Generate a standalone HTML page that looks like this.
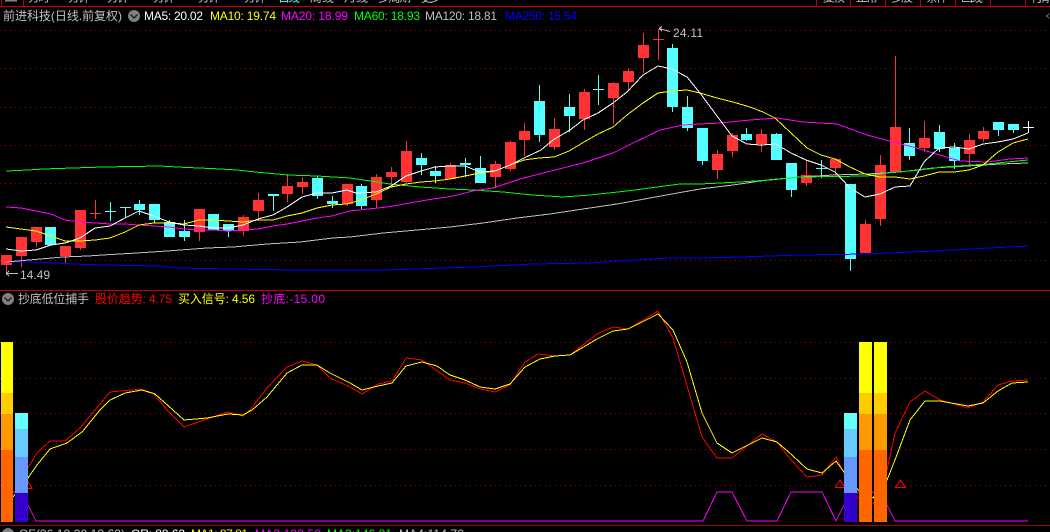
<!DOCTYPE html>
<html lang="zh"><head><meta charset="utf-8"><title>前进科技</title>
<style>
html,body{margin:0;padding:0;background:#000;width:1050px;height:532px;overflow:hidden}
svg{display:block;position:absolute;left:0;top:0}
text{font-family:"Liberation Sans","WenQuanYi Zen Hei","Noto Sans CJK SC",sans-serif;font-size:12px;white-space:pre}
.l{fill:none;stroke-width:1;shape-rendering:crispEdges}
.m{fill:none;stroke-width:1;shape-rendering:crispEdges}
</style></head><body>
<svg width="1050" height="532" viewBox="0 0 1050 532" xmlns="http://www.w3.org/2000/svg">
<rect width="1050" height="532" fill="#000"/>

<!-- top tabs -->
<g fill="#c0c0c0">
<text x="28" y="1.500" textLength="22">分时</text><text x="68" y="1.500" textLength="22">分钟</text><text x="107" y="1.500" textLength="22">分钟</text><text x="153" y="1.500" textLength="22">分钟</text><text x="198" y="1.500" textLength="22">分钟</text><text x="244" y="1.500" textLength="22">分钟</text>
<text x="278" y="1.500" textLength="22" fill="#54ffff">日线</text>
<text x="310" y="1.500" textLength="24">周线</text><text x="344" y="1.500" textLength="24">月线</text><text x="378" y="1.500" textLength="33">多周期</text><text x="421" y="1.500" textLength="20">更多</text>
<text x="823" y="1.500" textLength="22">复权</text><text x="856" y="1.500" textLength="22">正常</text><text x="891" y="1.500" textLength="22">多股</text><text x="926" y="1.500" textLength="22">条件</text><text x="961" y="1.500" textLength="22">画线</text><text x="1031" y="1.500" textLength="19">行情</text>
</g>
<rect x="5" y="0" width="12" height="1.500" fill="#808080"/>
<path class="l" stroke="#c00000" d="M1.500 0V6M23.500 0V6M816.500 0V6M850.500 0V6M885.500 0V6M920.500 0V6M955.500 0V6M990.500 0V6M1025.500 0V6"/>
<path class="l" stroke="#c00000" d="M0 6.500H1050M0 290.500H1050"/>
<path class="l" stroke="#a00000" d="M0 525.500H1050"/>

<!-- grid -->
<path class="l" stroke="#a80000" stroke-dasharray="1 4" d="M0 30.500H1050M0 68.500H1050M0 107.500H1050M0 145.500H1050M0 183.500H1050M0 222.500H1050M0 260.500H1050M0 342.500H1050M0 378.500H1050M0 413.500H1050M0 449.500H1050M0 485.500H1050"/>

<!-- red candles: wicks -->
<path class="l" stroke="#ff3333" d="M6.500 255V273M21.500 237V267M36.500 227V247M65.500 246V263M80.500 210V250M95.500 200V219M90 213.500H101M199.500 209V241M243.500 215V236M258.500 193V218M287.500 174V202M302.500 177V194M347.500 184V206M376.500 174V208M391.500 167V186M406.500 141V183M450.500 163V179M495.500 161V188M510.500 141V171M524.500 123V156M554.500 118V150M584.500 89V130M613.500 82V124M628.500 68V90M643.500 33V73M658.500 29V60M653 39.500H664M717.500 150V179M732.500 133V157M761.500 129V152M806.500 160V186M835.500 158V175M865.500 220V253M880.500 155V226M895.500 56V172M924.500 121V152M969.500 134V165M983.500 127V142"/>
<!-- red candles: bodies -->
<path class="l" stroke="#ff3333" style="stroke-width:11" d="M6.500 255V265M21.500 237V256M36.500 227V242M65.500 246V256M80.500 210V248M199.500 209V232M243.500 217V231M258.500 200V211M287.500 186V194M302.500 182V187M347.500 184V204M376.500 177V200M391.500 172V177M406.500 151V182M450.500 165V179M495.500 164V177M510.500 142V169M524.500 131V140M554.500 129V147M584.500 92V119M613.500 83V98M628.500 71V82M643.500 45V58M717.500 154V170M732.500 135V151M761.500 134V144M806.500 175V183M835.500 159V168M865.500 224V253M880.500 165V219M895.500 127V172M924.500 138V148M969.500 140V154M983.500 131V139"/>
<!-- cyan candles: wicks -->
<path class="l" stroke="#54ffff" d="M110.500 202V221M105 211.500H116M125.500 207V218M120 207.500H131M139.500 200V215M154.500 204V223M169.500 220V237M184.500 220V241M228.500 224V237M273.500 194V211M317.500 176V199M332.500 196V208M361.500 184V209M421.500 153V175M435.500 166V183M465.500 158V177M480.500 156V183M539.500 85V142M569.500 94V132M598.500 75V105M593 89.500H604M672.500 44V112M687.500 96V131M702.500 128V165M746.500 128V141M776.500 133V160M791.500 163V197M821.500 160V178M816 168.500H827M850.500 184V271M909.500 128V160M939.500 125V152M954.500 143V169M998.500 122V136M1013.500 124V133"/>
<!-- cyan candles: bodies -->
<path class="l" stroke="#54ffff" style="stroke-width:11" d="M50.500 227V245M139.500 204V210M154.500 204V220M169.500 222V237M184.500 231V237M213.500 214V230M228.500 224V231M273.500 194V196M317.500 178V196M332.500 201V204M361.500 186V206M421.500 158V165M435.500 171V176M465.500 163V165M480.500 168V183M539.500 101V135M569.500 107V116M672.500 48V107M687.500 107V128M702.500 128V161M746.500 134V140M776.500 134V160M791.500 163V190M850.500 184V259M909.500 143V156M939.500 132V149M954.500 148V161M998.500 122V130M1013.500 124V130"/>
<path class="l" stroke="#ffffff" d="M1028.500 121V133M1023 127.500H1034"/>

<!-- moving averages -->
<polyline class="m" stroke="#0000ff" points="6,262 29,262 57,263 73,264 103,265 160,266 177,268 233,269 293,270 350,270 383,270 413,269 473,267 533,264 590,263 637,260 667,258 700,258 740,257 800,255 867,254 933,251 990,248 1028,246"/>
<polyline class="m" stroke="#c0c0c0" points="6,262 29,260 63,257 88,256 103,255 137,253 167,251 207,248 233,247 267,244 300,242 333,238 350,237 383,233 417,230 450,227 483,223 517,218 550,214 583,209 617,204 650,198 683,192 700,189 733,185 767,180 800,177 833,175 867,174 900,172 933,168 967,166 1000,164 1028,163"/>
<polyline class="m" stroke="#00ff00" points="6,171 28,170 43,169 73,168 103,167 160,166 177,167 221,169 237,170 255,172 288,175 317,176 350,178 390,184 420,187 450,189 473,190 503,192 532,195 563,197 590,195 627,191 657,187 680,184 700,184 740,182 770,180 800,177 867,176 887,173 920,170 943,167 987,164 1028,160"/>
<polyline class="m" stroke="#ff00ff" points="6,207 21,208 36,211 51,214 65,220 80,222 95,223 110,224 125,224 139,225 154,226 169,227 184,229 199,230 213,230 228,231 243,230 258,229 273,226 287,224 302,221 317,218 332,216 350,211 387,207 427,200 453,196 473,191 493,188 520,179 547,172 583,163 613,153 633,143 660,130 683,125 700,124 720,123 750,120 777,118 803,122 837,124 867,135 893,142 913,147 933,153 960,161 987,162 1010,159 1028,158"/>
<polyline class="m" stroke="#ffff00" points="6,227 21,229 36,231 51,236 65,241 80,241 95,240 110,238 125,232 139,225 154,223 169,223 184,224 199,220 213,220 228,221 243,222 258,220 273,220 287,216 302,213 317,208 332,205 347,204 361,200 376,194 391,187 406,184 421,182 435,181 450,179 465,176 480,173 495,171 510,165 524,160 539,158 554,157 569,151 584,142 598,134 613,127 627,115 643,103 658,93 672,91 687,90 700,93 717,98 733,102 750,107 763,112 775,118 807,148 821,155 835,159 850,167 865,174 880,177 895,177 910,179 924,176 939,172 954,172 969,170 983,165 998,152 1013,143 1028,139"/>
<polyline class="m" stroke="#ffffff" points="6,249 21,251 36,250 51,245 65,243 80,238 95,228 110,226 125,218 139,211 154,216 169,222 184,225 199,226 213,228 228,228 243,225 258,219 273,215 287,207 302,197 317,193 332,193 347,190 356,193 376,192 391,186 406,176 421,171 435,167 450,166 465,166 480,172 495,171 510,165 524,158 541,150 553,140 570,130 583,120 598,113 613,103 627,92 643,75 658,66 672,69 687,77 700,93 720,120 732,136 747,144 761,145 776,144 791,153 806,160 821,165 835,172 850,188 865,197 880,194 895,187 910,186 924,162 939,148 954,147 969,149 983,144 998,142 1013,139 1028,133"/>

<!-- price labels -->
<path class="l" stroke="#c0c0c0" d="M6 273.500H18M6 273.500L9 271M6 273.500L9 276M659 28.500L670 31.500M659 28.500L662 26.500M659 28.500L662 31"/>
<text x="20" y="279" fill="#c0c0c0" textLength="30">14.49</text>
<text x="673" y="37" fill="#c0c0c0" textLength="30">24.11</text>

<!-- header main -->
<text x="3" y="20" fill="#c0c0c0" textLength="119">前进科技(日线.前复权)</text>
<circle cx="134" cy="16" r="6" fill="#808080"/><path d="M130.500 14.500L134 18L137.500 14.500" fill="none" stroke="#222" stroke-width="1.500"/>
<text x="144" y="20" fill="#ffffff" textLength="59">MA5: 20.02</text>
<text x="210" y="20" fill="#ffff00" textLength="66">MA10: 19.74</text>
<text x="281" y="20" fill="#ff00ff" textLength="67">MA20: 18.99</text>
<text x="354" y="20" fill="#00ff00" textLength="66">MA60: 18.93</text>
<text x="425" y="20" fill="#c0c0c0" textLength="72">MA120: 18.81</text>
<text x="505" y="20" fill="#0000ff" textLength="72">MA250: 15.54</text>
<path class="l" stroke="#808080" d="M1049 14L1046.500 16L1049 18"/>

<!-- indicator lines -->
<polyline class="m" stroke="#ff00ff" points="13,492 20,492 28,505 36,521 703,521 717,492 732,492 747,521 777,521 791,492 822,492 836,521 844,505 858,492 873,492 887,505 895,521 1028,521"/>
<path class="l" stroke="#ff0000" d="M22 488.500L27 480L32 488.500ZM835.500 487.500L840 480L845 487.500ZM895.500 487.500L900.500 480L905.500 487.500Z"/>
<polyline class="m" stroke="#ff0000" points="16,484 28,468 37,453 50,441 65,441 80,428 95,410 110,392 132,390 140,389 153,393 167,410 184,427 207,419 228,412 243,416 250,410 267,388 287,367 302,361 317,365 330,378 350,387 362,394 378,384 392,381 406,358 422,360 450,380 465,383 480,389 495,392 510,385 525,362 538,354 555,356 570,355 597,334 613,327 628,329 658,311 673,338 702,437 717,458 732,458 762,434 777,442 792,461 807,477 822,475 836,457 844,473 858,498 873,504 887,470 895,433 910,402 925,391 940,400 968,408 983,402 998,385 1012,381 1028,380"/>
<polyline class="m" stroke="#ffff00" points="13,497 28,478 37,465 50,449 67,443 82,432 100,410 110,400 125,393 142,390 155,394 173,410 184,420 207,418 228,414 243,415 252,410 267,397 287,373 302,365 317,365 330,373 350,383 362,390 378,386 392,383 406,366 422,362 437,366 450,375 465,380 480,387 495,389 510,384 525,367 540,359 555,356 570,355 597,339 613,331 628,329 658,314 673,330 687,362 702,413 717,443 732,453 762,438 777,442 792,455 807,469 822,473 836,461 844,472 858,490 873,498 887,480 895,460 910,420 925,401 940,401 968,406 983,403 998,391 1012,383 1028,382"/>

<!-- indicator bars -->
<g shape-rendering="crispEdges">
<rect x="1" y="342" width="12" height="51" fill="#ffff00"/><rect x="1" y="393" width="12" height="21" fill="#ffcc00"/><rect x="1" y="414" width="12" height="36" fill="#ff9900"/><rect x="1" y="450" width="12" height="72" fill="#ff6600"/>
<rect x="15" y="413" width="13" height="16" fill="#66ffff"/><rect x="15" y="429" width="13" height="28" fill="#66ccff"/><rect x="15" y="457" width="13" height="36" fill="#6699ff"/><rect x="15" y="493" width="13" height="29" fill="#3300cc"/>
<rect x="844" y="413" width="13" height="16" fill="#66ffff"/><rect x="844" y="429" width="13" height="28" fill="#66ccff"/><rect x="844" y="457" width="13" height="36" fill="#6699ff"/><rect x="844" y="493" width="13" height="29" fill="#3300cc"/>
<rect x="859" y="342" width="13" height="51" fill="#ffff00"/><rect x="859" y="393" width="13" height="21" fill="#ffcc00"/><rect x="859" y="414" width="13" height="36" fill="#ff9900"/><rect x="859" y="450" width="13" height="72" fill="#ff6600"/>
<rect x="874" y="342" width="13" height="51" fill="#ffff00"/><rect x="874" y="393" width="13" height="21" fill="#ffcc00"/><rect x="874" y="414" width="13" height="36" fill="#ff9900"/><rect x="874" y="450" width="13" height="72" fill="#ff6600"/>
</g>

<!-- header indicator -->
<circle cx="8" cy="299" r="6" fill="#808080"/><path d="M4.500 297.500L8 301L11.500 297.500" fill="none" stroke="#222" stroke-width="1.500"/>
<text x="18" y="303" fill="#c0c0c0" textLength="71">抄底低位捕手</text>
<text x="95" y="303" fill="#ff0000" textLength="77">股价趋势: 4.75</text>
<text x="178" y="303" fill="#ffff00" textLength="77">买入信号: 4.56</text>
<text x="261" y="303" fill="#ff00ff" textLength="64">抄底:-15.00</text>

<!-- footer clipped -->
<circle cx="8" cy="534" r="6" fill="#808080"/>
<text x="19" y="538" fill="#c0c0c0" textLength="106">OF(26.10.30 18.62)</text>
<text x="131" y="538" fill="#ffffff" textLength="54">OR: 88.62</text>
<text x="191" y="538" fill="#ffff00" textLength="57">MA1: 87.81</text>
<text x="255" y="538" fill="#ff00ff" textLength="66">MA2:133.50</text>
<text x="327" y="538" fill="#00ff00" textLength="65">MA3:146.81</text>
<text x="399" y="538" fill="#c0c0c0" textLength="65">MA4:114.70</text>
</svg>
</body></html>
